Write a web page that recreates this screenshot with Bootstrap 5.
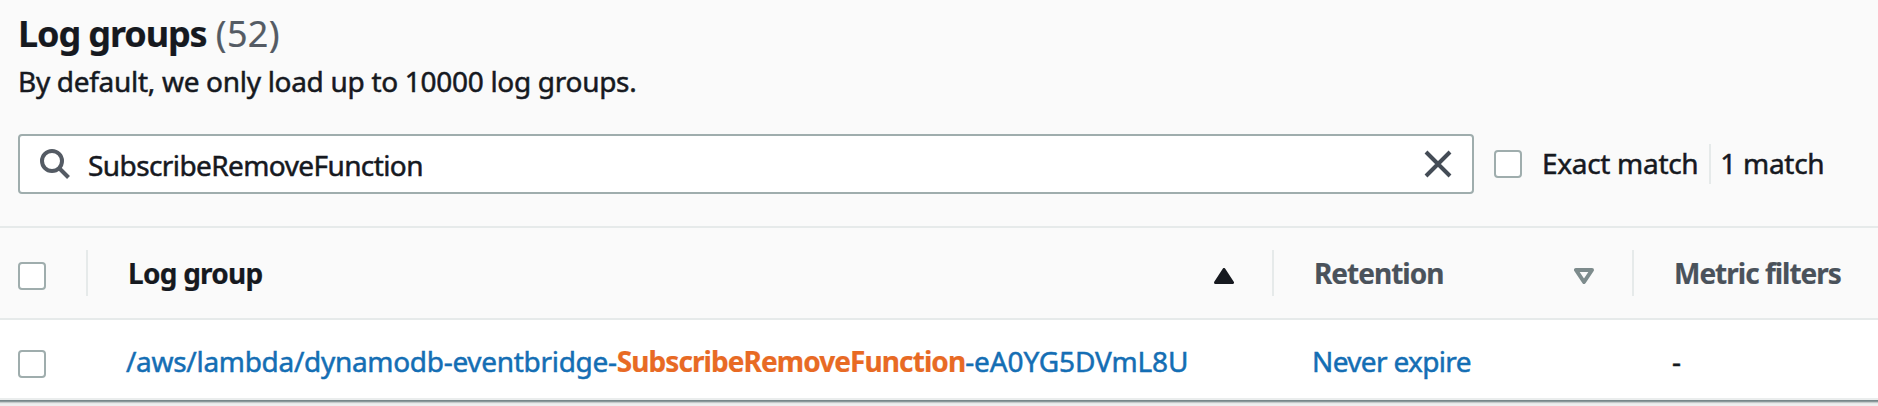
<!DOCTYPE html>
<html lang="en">
<head>
<meta charset="utf-8">
<meta name="viewport" content="width=device-width, initial-scale=1">
<title>Log groups</title>
<link href="https://cdn.jsdelivr.net/npm/bootstrap@5.3.0/dist/css/bootstrap.min.css" rel="stylesheet">
<style>
  body { font: 400 28px/36px "Noto Sans", "Open Sans", sans-serif; color: #16191f; background: #f2f3f3; overflow: hidden; letter-spacing: -.3px; -webkit-text-stroke: .5px; }
  b, .heads, h1 { -webkit-text-stroke: .2px; }
  .panel { background: #fafafa; height: 400px; }
  .top-area { padding: 12px 18px 32px; }
  h1 { font-size: 36px; line-height: 44px; font-weight: 700; letter-spacing: -1.1px; margin: 0 0 7px; }
  h1 span { font-weight: 400; color: #545b64; letter-spacing: .3px; margin-left: 1px; }
  .intro { margin: 0 0 35px; letter-spacing: -.3px; }
  .search { width: 1456px; height: 60px; background: #fff; border: 2px solid #9fadad; border-radius: 4px; padding: 0 19px 0 20px; }
  .search .form-control { font: inherit; letter-spacing: -.59px; color: inherit; padding: 2px 0 0; margin-left: 17px; }
  .form-check-input.tick { width: 28px; height: 28px; margin: 0; border: 2px solid #9fadad; border-radius: 4px; background-color: #fff; flex: none; }
  .matches label { margin-left: 20px; }
  .rule { width: 2px; background: #e6eaea; flex: none; }
  .matches .rule { height: 40px; }
  .exact { margin: -2px 11px 0 20px; }
  .count { margin: -2px 0 0 9px; }
  .line { display: grid; grid-template-columns: 86px 1186px 360px 1fr; align-items: center; white-space: nowrap; }
  .heads { height: 94px; border-top: 2px solid #e6eaea; border-bottom: 2px solid #e6eaea; font-weight: 700; color: #4a525b; letter-spacing: -1px; }
  .heads .rule { height: 46px; margin-right: 40px; }
  .heads .tick { margin: 6px 0 0 18px; }
  .heads svg { margin: 5px 38px 0 auto; }
  .name { color: #16191f; letter-spacing: -.75px; }
  .entry { height: 80px; background: #fff; border-bottom: 2px solid #eaeded; }
  .entry .tick { margin: 10px 0 0 18px; }
  .entry a { color: #146eb4; text-decoration: none; }
  .entry > div, .entry > a { padding: 3px 0 0 40px; }
  .entry b { color: #e86a24; letter-spacing: -.92px; }
  .suffix { letter-spacing: -.1px; }
  .expiry { letter-spacing: -.65px; }
  .edge { height: 6px; background: linear-gradient(#77878a 0 1px, #8b999b 1px 2px, #c3caca 2px 3px, #e6e8e8 3px 4px, #eeefef 4px); }
</style>
</head>
<body>
<main class="panel">
  <section class="top-area">
    <h1>Log groups <span>(52)</span></h1>
    <p class="intro">By default, we only load up to 10000 log groups.</p>
    <div class="d-flex align-items-center matches">
      <div class="search d-flex align-items-center">
        <svg width="31" height="32" viewBox="0 0 31 32" fill="none" stroke="#545b64" stroke-width="4" class="flex-shrink-0"><circle cx="12" cy="13" r="10"/><path d="M19 20l9.500 9.500"/></svg>
        <input class="form-control border-0 bg-transparent shadow-none" type="text" value="SubscribeRemoveFunction" aria-label="Filter log groups">
        <svg width="30" height="30" viewBox="0 0 30 30" fill="none" stroke="#444c56" stroke-width="4" class="flex-shrink-0"><path d="M3 3l24 24M27 3L3 27"/></svg>
      </div>
      <label class="d-flex align-items-center text-nowrap"><input type="checkbox" class="form-check-input tick"><span class="exact">Exact match</span></label>
      <span class="rule"></span>
      <span class="text-nowrap count">1 match</span>
    </div>
  </section>
  <section>
    <div class="line heads">
      <input type="checkbox" class="form-check-input tick" aria-label="Select all">
      <div class="d-flex align-items-center"><span class="rule"></span><span class="name">Log group</span>
        <svg width="20" height="16" viewBox="0 0 20 16"><path d="M10 1.500L18.500 14.500H1.500z" fill="#16191f" stroke="#16191f" stroke-width="3" stroke-linejoin="round"/></svg></div>
      <div class="d-flex align-items-center"><span class="rule"></span><span>Retention</span>
        <svg width="20" height="16" viewBox="0 0 20 16"><path d="M2 2H18L10 14z" fill="none" stroke="#7d8b8c" stroke-width="4" stroke-linejoin="round"/></svg></div>
      <div class="d-flex align-items-center"><span class="rule"></span><span>Metric filters</span></div>
    </div>
    <div class="line entry">
      <input type="checkbox" class="form-check-input tick" aria-label="Select log group">
      <a href="#">/aws/lambda/dynamodb-eventbridge-<b>SubscribeRemoveFunction</b><span class="suffix">-eA0YG5DVmL8U</span></a>
      <a href="#" class="expiry">Never expire</a>
      <div>-</div>
    </div>
  </section>
</main>
<div class="edge"></div>
<script src="https://cdn.jsdelivr.net/npm/bootstrap@5.3.0/dist/js/bootstrap.bundle.min.js"></script>
</body>
</html>
